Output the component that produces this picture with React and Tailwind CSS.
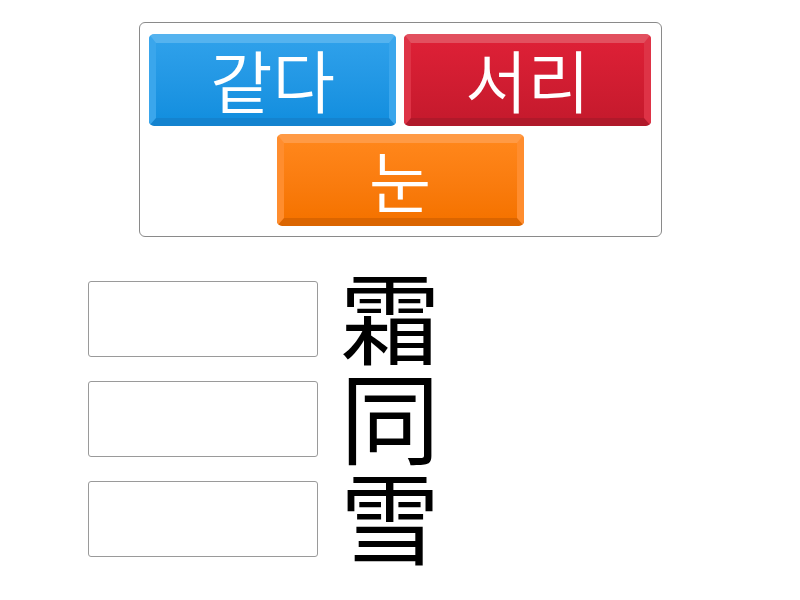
import React from "react";

function Btn({ label, cls }) {
  return (
    <div
      className={`w-[247px] h-[92px] rounded-[5px] border-x-[7px] border-t-[9px] border-b-[8px] flex items-center justify-center text-white text-[68px] font-[350] leading-none ${cls}`}
      style={{ fontFamily: '"Noto Sans CJK KR", "Noto Sans", sans-serif' }}
    >
      <span className="-mt-[4px]">{label}</span>
    </div>
  );
}

export default function App() {
  return (
    <div className="w-[800px] h-[600px] bg-white overflow-hidden">
      <div className="mt-[22px] mx-auto w-[523px] h-[215px] border border-[#8a8a8a] rounded-[6px] pt-[11px] flex flex-wrap justify-center content-start gap-x-[8px] gap-y-[8px]">
        <Btn
          label="같다"
          cls="bg-gradient-to-b from-[#2ea0ea] to-[#138fdf] border-t-[#55b3ef] border-x-[#3aa6ec] border-b-[#1483cf]"
        />
        <Btn
          label="서리"
          cls="bg-gradient-to-b from-[#dd2036] to-[#c61a2d] border-t-[#e2505f] border-x-[#de3346] border-b-[#b0192a]"
        />
        <Btn
          label="눈"
          cls="bg-gradient-to-b from-[#ff861a] to-[#f57300] border-t-[#ff9a45] border-x-[#ff8d2e] border-b-[#db6500]"
        />
      </div>
      <div className="mt-[27px] ml-[88px] flex items-start">
        <div className="flex flex-col gap-[24px] pt-[17px]">
          <div className="w-[230px] h-[76px] border border-[#9a9a9a] rounded-[3px] bg-white" />
          <div className="w-[230px] h-[76px] border border-[#9a9a9a] rounded-[3px] bg-white" />
          <div className="w-[230px] h-[76px] border border-[#9a9a9a] rounded-[3px] bg-white" />
        </div>
        <div
          className="ml-[22px] text-[100px] leading-[100px] text-black"
          style={{ fontFamily: '"Noto Sans CJK SC", "Noto Sans CJK KR", sans-serif' }}
        >
          霜<br />同<br />雪
        </div>
      </div>
    </div>
  );
}
